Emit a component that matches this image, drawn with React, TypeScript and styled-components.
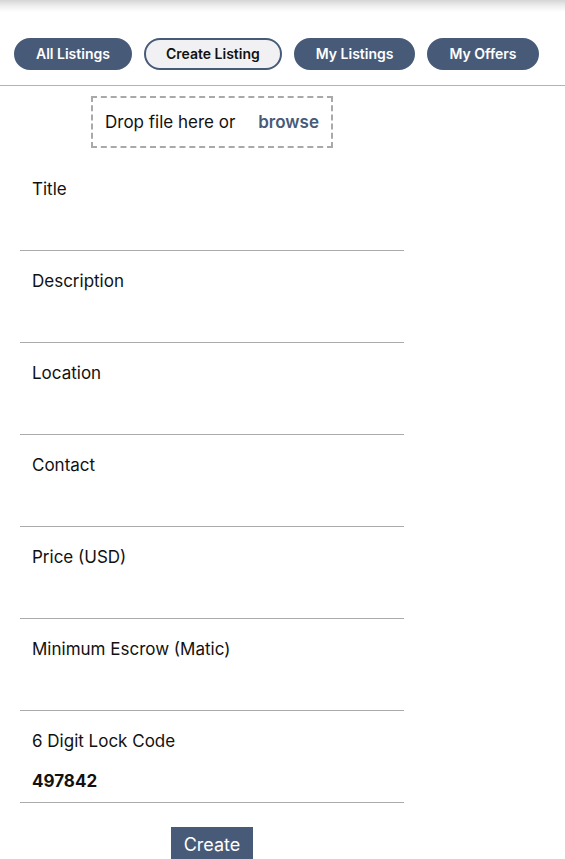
import React from "react";
import styled, { createGlobalStyle } from "styled-components";

const Global = createGlobalStyle`
  html, body { margin: 0; padding: 0; background: #ffffff; }
  body { font-family: Inter, "Noto Sans", Arial, sans-serif; color: #111111; }
  * { box-sizing: border-box; }
`;

const Shade = styled.div`
  height: 12px;
  background: linear-gradient(to bottom, #d4d4d4 0%, #ececec 45%, #ffffff 100%);
`;

const Nav = styled.nav`
  display: flex;
  gap: 12px;
  padding: 26px 14px 15px;
  border-bottom: 1px solid #b3b3b3;
`;

const NavButton = styled.button<{ $active?: boolean }>`
  height: 32px;
  padding: 0 20px;
  border-radius: 16px;
  border: 2px solid #475b79;
  background: ${(p) => (p.$active ? "#f1f1f3" : "#475b79")};
  color: ${(p) => (p.$active ? "#111111" : "#ffffff")};
  font-family: Inter, Arial, sans-serif;
  font-size: 14px;
  font-weight: 600;
  line-height: 1;
  cursor: pointer;
`;

const Form = styled.form`
  width: 384px;
  margin-left: 20px;
  display: flex;
  flex-direction: column;
  align-items: center;
`;

const Drop = styled.div`
  margin-top: 10px;
  width: 242px;
  height: 52px;
  border: 2px dashed #a9a9a9;
  display: flex;
  align-items: center;
  justify-content: space-between;
  padding: 0 12px;
  font-size: 17px;
  color: #111111;
`;

const Browse = styled.span`
  color: #475b79;
  font-weight: 600;
`;

const Fields = styled.div`
  margin-top: 11px;
  align-self: stretch;
  display: flex;
  flex-direction: column;
`;

const Field = styled.label`
  display: flex;
  flex-direction: column;
  height: 92px;
  padding: 20px 12px 0;
  border-bottom: 1px solid #ababab;
`;

const Label = styled.span`
  font-size: 17px;
  line-height: 20px;
  color: #111111;
`;

const Input = styled.input`
  margin-top: 10px;
  height: 40px;
  border: none;
  outline: none;
  padding: 0;
  background: transparent;
  font-family: Inter, Arial, sans-serif;
  font-size: 17px;
  font-weight: 700;
  color: #111111;
`;

const Submit = styled.button`
  margin-top: 24px;
  height: 34px;
  padding: 0 13px;
  border: none;
  border-radius: 0;
  background: #475b79;
  color: #ffffff;
  font-family: Inter, Arial, sans-serif;
  font-size: 18px;
  font-weight: 400;
`;

const fields: { label: string; value?: string }[] = [
  { label: "Title" },
  { label: "Description" },
  { label: "Location" },
  { label: "Contact" },
  { label: "Price (USD)" },
  { label: "Minimum Escrow (Matic)" },
  { label: "6 Digit Lock Code", value: "497842" },
];

export default function App() {
  return (
    <>
      <Global />
      <Shade />
      <Nav>
        <NavButton>All Listings</NavButton>
        <NavButton $active>Create Listing</NavButton>
        <NavButton>My Listings</NavButton>
        <NavButton>My Offers</NavButton>
      </Nav>
      <Form onSubmit={(e) => e.preventDefault()}>
        <Drop>
          <span>Drop file here or</span>
          <Browse>browse</Browse>
        </Drop>
        <Fields>
          {fields.map((f) => (
            <Field key={f.label}>
              <Label>{f.label}</Label>
              <Input defaultValue={f.value ?? ""} />
            </Field>
          ))}
        </Fields>
        <Submit type="submit">Create</Submit>
      </Form>
    </>
  );
}
